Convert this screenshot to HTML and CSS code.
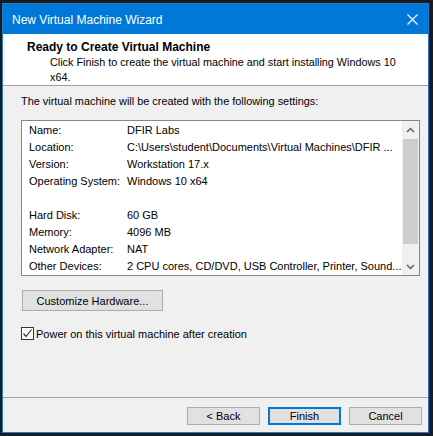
FILE: index.html
```html
<!DOCTYPE html>
<html>
<head>
<meta charset="utf-8">
<link rel="stylesheet" href="styles.css">
</head>
<body>
<div class="window">
  <div class="titlebar">
    <span class="title">New Virtual Machine Wizard</span>
    <svg class="close" width="11" height="11" viewBox="0 0 11 11"><path d="M0.5 0.5 L10.5 10.5 M10.5 0.5 L0.5 10.5" stroke="#fff" stroke-width="1.1" fill="none"/></svg>
  </div>
  <div class="header">
    <div class="h-title">Ready to Create Virtual Machine</div>
    <div class="h-sub">Click Finish to create the virtual machine and start installing Windows 10<br>x64.</div>
  </div>
  <div class="body">
    <div class="desc">The virtual machine will be created with the following settings:</div>
    <div class="listbox">
      <div class="rows">
        <div class="row"><span class="lbl">Name:</span><span class="val">DFIR Labs</span></div>
        <div class="row"><span class="lbl">Location:</span><span class="val">C:\Users\student\Documents\Virtual Machines\DFIR ...</span></div>
        <div class="row"><span class="lbl">Version:</span><span class="val">Workstation 17.x</span></div>
        <div class="row"><span class="lbl">Operating System:</span><span class="val">Windows 10 x64</span></div>
        <div class="row"></div>
        <div class="row"><span class="lbl">Hard Disk:</span><span class="val">60 GB</span></div>
        <div class="row"><span class="lbl">Memory:</span><span class="val">4096 MB</span></div>
        <div class="row"><span class="lbl">Network Adapter:</span><span class="val">NAT</span></div>
        <div class="row"><span class="lbl">Other Devices:</span><span class="val">2 CPU cores, CD/DVD, USB Controller, Printer, Sound...</span></div>
      </div>
      <div class="scrollbar">
        <div class="arrow"><svg width="9" height="6" viewBox="0 0 9 6"><path d="M1 5 L4.5 1.5 L8 5" stroke="#606060" stroke-width="1.5" fill="none"/></svg></div>
        <div class="track"><div class="thumb"></div></div>
        <div class="arrow"><svg width="9" height="6" viewBox="0 0 9 6"><path d="M1 1 L4.5 4.5 L8 1" stroke="#606060" stroke-width="1.5" fill="none"/></svg></div>
      </div>
    </div>
    <div class="btn custom">Customize Hardware...</div>
    <div class="check-row">
      <span class="checkbox"><svg width="11" height="11" viewBox="0 0 11 11"><path d="M1.5 5.5 L4 8.5 L9.5 1.5" stroke="#333" stroke-width="1.2" fill="none"/></svg></span>
      <span class="check-label">Power on this virtual machine after creation</span>
    </div>
  </div>
  <div class="footer">
    <div class="btn">&lt; Back</div>
    <div class="btn primary">Finish</div>
    <div class="btn">Cancel</div>
  </div>
</div>
</body>
</html>
```
FILE: styles.css
```css
html, body {
  margin: 0;
  padding: 0;
  background: #1b1b1b;
  width: 433px;
  height: 436px;
  overflow: hidden;
  font-family: "Liberation Sans", Arial, sans-serif;
  font-size: 11px;
  color: #000;
}
.window {
  box-sizing: border-box;
  width: 427px;
  height: 430px;
  margin: 3px 0 0 2px;
  border: 1px solid #1a7fd6;
  background: #f0f0f0;
  display: flex;
  flex-direction: column;
}
.titlebar {
  height: 30px;
  background: #0078d7;
  display: flex;
  align-items: center;
  justify-content: space-between;
  padding: 0 10px 0 9px;
  flex-shrink: 0;
}
.title {
  color: #fff;
  font-size: 12px;
  padding-top: 1px;
}
.close {
  display: block;
}
.header {
  height: 52px;
  background: #fff;
  border-bottom: 1px solid #a0a0a0;
  flex-shrink: 0;
  box-sizing: border-box;
  padding-top: 5px;
}
.h-title {
  font-weight: bold;
  font-size: 12px;
  padding-left: 24px;
  line-height: 16px;
}
.h-sub {
  padding-left: 47px;
  font-size: 10.8px;
  line-height: 15px;
}
.body {
  flex: 1;
  padding-left: 18px;
  padding-right: 9px;
  display: flex;
  flex-direction: column;
  align-items: flex-start;
}
.desc {
  margin-top: 7px;
  line-height: 17px;
  font-size: 10.9px;
}
.listbox {
  margin-top: 10px;
  box-sizing: border-box;
  width: 399px;
  height: 156px;
  border: 1px solid #828790;
  background: #fff;
  display: flex;
}
.rows {
  flex: 1;
  padding-top: 1px;
  padding-left: 7px;
}
.row {
  height: 17px;
  line-height: 17px;
  display: flex;
  white-space: nowrap;
}
.lbl {
  width: 98px;
  flex-shrink: 0;
}
.scrollbar {
  width: 17px;
  background: #f0f0f0;
  display: flex;
  flex-direction: column;
}
.arrow {
  height: 17px;
  display: flex;
  align-items: center;
  justify-content: center;
}
.track {
  flex: 1;
  padding: 1px 1px 0 1px;
}
.thumb {
  height: 105px;
  background: #cdcdcd;
}
.btn {
  box-sizing: border-box;
  width: 73px;
  height: 18px;
  background: #e1e1e1;
  border: 1px solid #adadad;
  display: flex;
  align-items: center;
  justify-content: center;
}
.btn.custom {
  width: 141px;
  height: 21px;
  margin-top: 14px;
  margin-left: 1px;
}
.btn.primary {
  border: 2px solid #0078d7;
}
.check-row {
  margin-top: 16px;
  display: flex;
  align-items: center;
}
.checkbox {
  box-sizing: border-box;
  width: 13px;
  height: 13px;
  border: 1px solid #333;
  background: #fff;
  display: flex;
  align-items: center;
  justify-content: center;
}
.checkbox svg {
  display: block;
}
.check-label {
  margin-left: 2px;
}
.footer {
  flex-shrink: 0;
  height: 35px;
  box-sizing: border-box;
  border-top: 1px solid #a0a0a0;
  display: flex;
  justify-content: flex-end;
  gap: 8px;
  padding: 9px 6px 0 0;
}
```
